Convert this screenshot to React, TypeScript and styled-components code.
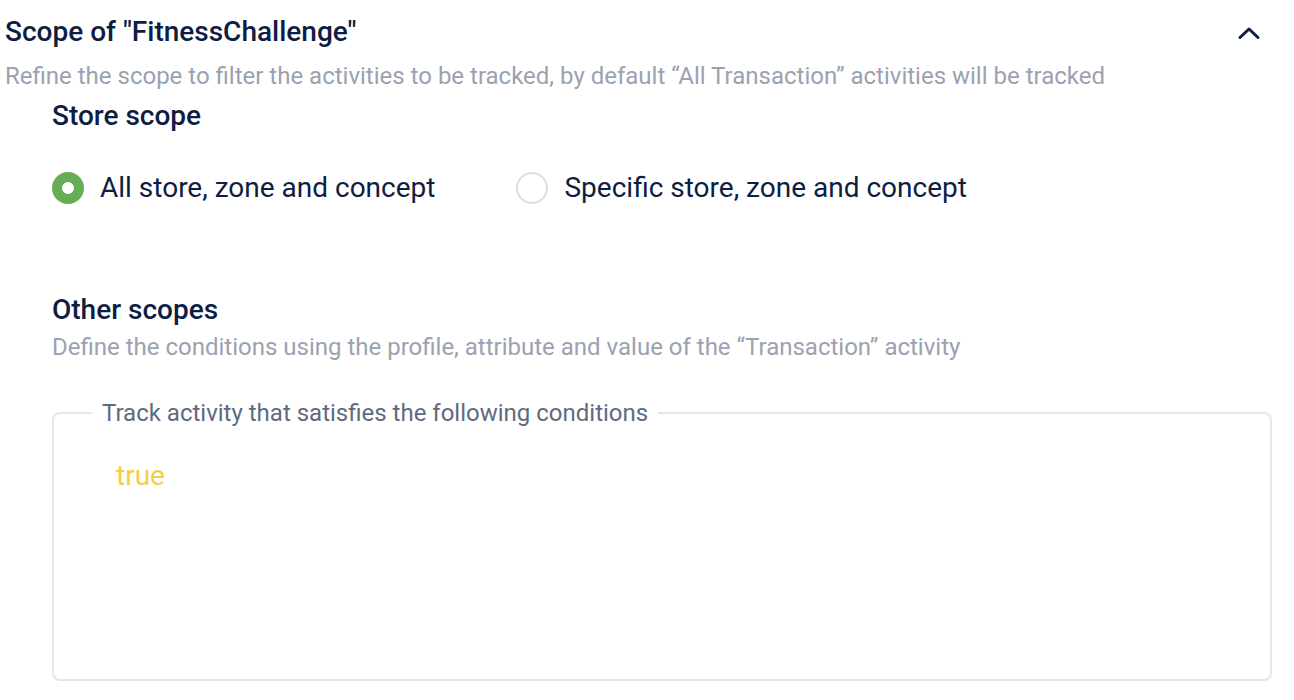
import React, { useState } from "react";
import styled, { createGlobalStyle } from "styled-components";

const GlobalStyle = createGlobalStyle`
  html, body { margin: 0; padding: 0; background: #ffffff; }
  body { font-family: Roboto, "Noto Sans", "Liberation Sans", sans-serif; -webkit-font-smoothing: antialiased; }
  * { box-sizing: border-box; }
`;

const Page = styled.div`
  width: 1294px;
  padding: 16px 22px 0 5px;
`;

const Header = styled.div`
  display: flex;
  align-items: flex-start;
  justify-content: space-between;
`;

const TitleBlock = styled.div`
  display: flex;
  flex-direction: column;
`;

const Title = styled.h2`
  margin: 0;
  font-size: 28px;
  line-height: 32px;
  font-weight: 500;
  color: #0e1d42;
`;

const Subtitle = styled.p<{ $indent?: boolean }>`
  margin: ${(p) => (p.$indent ? "5px 0 0" : "13px 0 0")};
  font-size: 24px;
  line-height: 30px;
  color: #9aa2b1;
`;

const ToggleButton = styled.button`
  border: none;
  background: none;
  padding: 0;
  margin-top: 4px;
  margin-right: 10px;
  width: 26px;
  height: 26px;
  display: flex;
  align-items: center;
  justify-content: center;
  cursor: pointer;
`;

const Body = styled.div`
  padding-left: 47px;
  margin-top: 8px;
`;

const SectionTitle = styled.h3`
  margin: 0;
  font-size: 28px;
  line-height: 34px;
  font-weight: 500;
  color: #0e1d42;
`;

const RadioGroup = styled.div`
  display: flex;
  gap: 81px;
  margin-top: 38px;
  margin-bottom: 88px;
`;

const RadioLabel = styled.label`
  display: flex;
  align-items: center;
  gap: 16px;
  font-size: 28px;
  line-height: 34px;
  color: #0e1d42;
  cursor: pointer;
`;

const RadioCircle = styled.span<{ $checked: boolean }>`
  width: 32px;
  height: 32px;
  border-radius: 50%;
  flex: none;
  background: #ffffff;
  border: ${(p) => (p.$checked ? "10px solid #66ae56" : "2px solid #dcdcdc")};
`;

const Fieldset = styled.fieldset`
  margin: 36px 0 0;
  padding: 31px 40px 0 38px;
  border: 2px solid #e3e6eb;
  border-radius: 8px;
  height: 283px;
`;

const Legend = styled.legend`
  padding: 0 10px;
  margin: 0;
  font-size: 24px;
  line-height: 30px;
  color: #5f6a80;
`;

const Expression = styled.div`
  margin-left: 24px;
  font-size: 28px;
  line-height: 34px;
  color: #f6cd3e;
`;

const ChevronUp = () => (
  <svg width="24" height="24" viewBox="0 0 24 24" fill="none">
    <path d="M3 16.5 L12 8 L21 16.5" stroke="#0e1d42" strokeWidth="3" strokeLinecap="round" strokeLinejoin="round" />
  </svg>
);

export default function App() {
  const [scope, setScope] = useState<"all" | "specific">("all");
  const options: { id: "all" | "specific"; label: string }[] = [
    { id: "all", label: "All store, zone and concept" },
    { id: "specific", label: "Specific store, zone and concept" },
  ];
  return (
    <>
      <GlobalStyle />
      <Page>
        <Header>
          <TitleBlock>
            <Title>Scope of "FitnessChallenge"</Title>
            <Subtitle>
              Refine the scope to filter the activities to be tracked, by default “All Transaction” activities will be tracked
            </Subtitle>
          </TitleBlock>
          <ToggleButton aria-label="Collapse">
            <ChevronUp />
          </ToggleButton>
        </Header>
        <Body>
          <SectionTitle>Store scope</SectionTitle>
          <RadioGroup>
            {options.map((o) => (
              <RadioLabel key={o.id} onClick={() => setScope(o.id)}>
                <RadioCircle $checked={scope === o.id} />
                {o.label}
              </RadioLabel>
            ))}
          </RadioGroup>
          <SectionTitle>Other scopes</SectionTitle>
          <Subtitle $indent>
            Define the conditions using the profile, attribute and value of the “Transaction” activity
          </Subtitle>
          <Fieldset>
            <Legend>Track activity that satisfies the following conditions</Legend>
            <Expression>true</Expression>
          </Fieldset>
        </Body>
      </Page>
    </>
  );
}
